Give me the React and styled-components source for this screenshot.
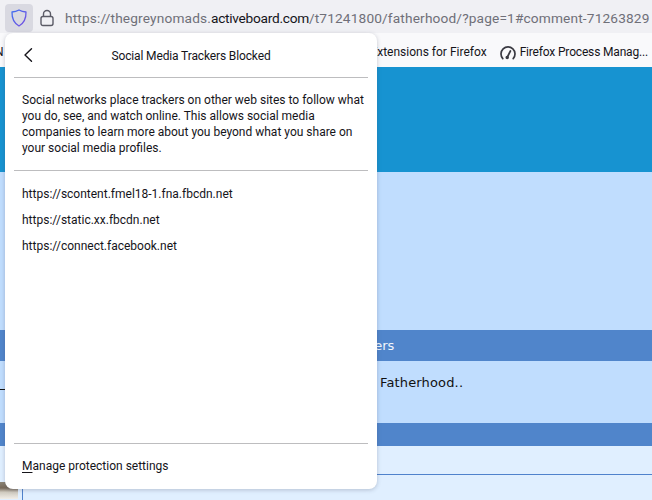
import React from "react";
import styled, { createGlobalStyle } from "styled-components";

const Global = createGlobalStyle`
  html, body { margin: 0; padding: 0; background: #e0efff; }
  body { font-family: Roboto, "Noto Sans", sans-serif; overflow: hidden; }
`;

const Page = styled.div`
  position: relative;
  width: 652px;
  height: 500px;
  overflow: hidden;
`;

const UrlBar = styled.div`
  height: 33px;
  background: #f0f0f4;
  display: flex;
  align-items: center;
  box-sizing: border-box;
  padding: 3px 0 0 5px;
  white-space: nowrap;
  overflow: hidden;
`;

const ShieldButton = styled.div`
  width: 28px;
  height: 28px;
  border-radius: 4px;
  background: #d9d9e1;
  display: flex;
  align-items: center;
  justify-content: center;
  flex: none;
`;

const LockBox = styled.div`
  width: 14px;
  height: 18px;
  margin-left: 7px;
  flex: none;
  display: flex;
`;

const Url = styled.div`
  margin-left: 11px;
  font-size: 13.7px;
  letter-spacing: 0.15px;
  color: #6f6f78;
  span { color: #15141a; letter-spacing: -0.27px; }
`;

const Bookmarks = styled.div`
  height: 34px;
  background: #f9f9fb;
  display: flex;
  align-items: center;
  justify-content: flex-end;
  box-sizing: border-box;
  padding: 4px 4px 0 0;
  font-size: 12px;
  color: #15141a;
  white-space: nowrap;
  gap: 13px;
`;

const Bookmark = styled.div`
  display: flex;
  align-items: center;
  gap: 4px;
  letter-spacing: ${p => p.$tracking || 0}px;
`;

const ClippedBookmark = styled(Bookmark)`
  margin-right: auto;
  margin-left: -5px;
`;

const Hero = styled.div`
  height: 105px;
  background: #1793d1;
`;

const Section = styled.div`
  height: ${p => p.$h}px;
  background: ${p => p.$bg};
  box-sizing: border-box;
`;

const Band = styled(Section)`
  color: #f2f6fc;
  font: 13px "DejaVu Sans", sans-serif;
  display: flex;
  align-items: center;
  padding-left: 334px;
`;

const PostText = styled(Section)`
  color: #111;
  font: 13px "DejaVu Sans", sans-serif;
  letter-spacing: 0.15px;
  display: flex;
  padding-top: 14px;
`;

const PostMark = styled.div`
  width: 5px;
  height: 1px;
  margin: 14px 375px 0 0;
  background: #111;
  flex: none;
`;

const Footer = styled(Section)`
  display: flex;
  padding-top: 28px;
`;

const Avatar = styled.div`
  width: 18px;
  height: 17px;
  margin: 8px 4px 0 0;
  flex: none;
  background: linear-gradient(180deg, #8d8577 0%, #77695a 35%, #cfcabf 60%, #f1eee8 100%);
`;

const Table = styled.div`
  flex: 1;
  border-top: 1px solid #4f82cc;
  border-left: 1px solid #4f82cc;
`;

const Popup = styled.div`
  position: absolute;
  left: 5px;
  top: 33px;
  width: 372px;
  height: 456px;
  background: #fff;
  border-radius: 8px;
  box-shadow: 0 1px 4px rgba(60, 70, 90, 0.28);
  display: flex;
  flex-direction: column;
  color: #15141a;
  font-size: 12px;
`;

const Header = styled.div`
  height: 44px;
  display: flex;
  align-items: center;
  justify-content: center;
  position: relative;
  flex: none;
  padding-top: 2px;
  box-sizing: border-box;
  letter-spacing: -0.13px;
`;

const Back = styled.div`
  position: absolute;
  left: 17px;
  top: 14px;
  width: 12px;
  height: 16px;
  display: flex;
`;

const Divider = styled.div`
  height: 1px;
  margin: 0 9px;
  background: #bdbdbf;
  flex: none;
`;

const Description = styled.p`
  margin: 0;
  padding: 14px 10px 5px 17px;
  line-height: 16px;
  flex: none;
  height: 92px;
  box-sizing: border-box;
`;

const Trackers = styled.ul`
  list-style: none;
  margin: 0;
  padding: 10px 17px 0;
  flex: 1;
`;

const Tracker = styled.li`
  height: 26px;
  line-height: 26px;
`;

const Manage = styled.div`
  height: 45px;
  display: flex;
  align-items: center;
  padding: 0 0 2px 17px;
  box-sizing: border-box;
  flex: none;
  u { text-underline-offset: 2px; }
`;

export default function App() {
  return (
    <Page>
      <Global />
      <UrlBar>
        <ShieldButton>
          <svg width="16" height="18" viewBox="0 0 16 18" fill="none">
            <defs>
              <linearGradient id="shieldStroke" x1="0" y1="0" x2="1" y2="1">
                <stop offset="0" stopColor="#3f6ff0" />
                <stop offset="1" stopColor="#7a4fe0" />
              </linearGradient>
            </defs>
            <path d="M8 1 C10 2.2 12.2 2.9 15 3 C15.2 9.6 12.6 14.4 8 17 C3.4 14.4 0.8 9.6 1 3 C3.8 2.9 6 2.2 8 1 Z" stroke="url(#shieldStroke)" strokeWidth="1.3" strokeLinejoin="round" />
          </svg>
        </ShieldButton>
        <LockBox>
          <svg width="14" height="18" viewBox="0 0 14 18" fill="none" stroke="#5b5b66" strokeWidth="1.4">
            <rect x="1" y="7.5" width="12" height="9" rx="2" />
            <path d="M3.5 7.5 V5 a3.5 3.5 0 0 1 7 0 V7.5" />
          </svg>
        </LockBox>
        <Url>https://thegreynomads.<span>activeboard.com</span>/t71241800/fatherhood/?page=1#comment-71263829</Url>
      </UrlBar>
      <Bookmarks>
        <ClippedBookmark>N</ClippedBookmark>
        <Bookmark>Extensions for Firefox</Bookmark>
        <Bookmark $tracking={-0.17}>
          <svg width="16" height="15" viewBox="0 0 16 15" fill="none" stroke="#3a3a42" strokeWidth="1.7" strokeLinecap="round">
            <path d="M2.8 13.6 A7 7 0 1 1 13.2 13.6" />
            <path d="M7.4 12 L10.4 6" />
            <circle cx="7.2" cy="12.4" r="0.9" fill="#3a3a42" />
          </svg>
          Firefox Process Manag...
        </Bookmark>
      </Bookmarks>
      <Hero />
      <Section $h={158} $bg="#c0ddfe" />
      <Band $h={31} $bg="#5085cb">Members</Band>
      <PostText $h={62} $bg="#c0ddfe"><PostMark />Fatherhood..</PostText>
      <Section $h={23} $bg="#5085cb" />
      <Footer $h={54} $bg="#e0efff">
        <Avatar />
        <Table />
      </Footer>
      <Popup>
        <Header>
          <Back>
            <svg width="12" height="16" viewBox="0 0 12 16" fill="none" stroke="#15141a" strokeWidth="1.4" strokeLinecap="round" strokeLinejoin="round">
              <path d="M9.5 1.8 L3 8 L9.5 14.2" />
            </svg>
          </Back>
          Social Media Trackers Blocked
        </Header>
        <Divider />
        <Description>
          Social networks place trackers on other web sites to follow what you do, see, and watch online. This allows social media companies to learn more about you beyond what you share on your social media profiles.
        </Description>
        <Divider />
        <Trackers>
          <Tracker>https://scontent.fmel18-1.fna.fbcdn.net</Tracker>
          <Tracker>https://static.xx.fbcdn.net</Tracker>
          <Tracker>https://connect.facebook.net</Tracker>
        </Trackers>
        <Divider />
        <Manage><span><u>M</u>anage protection settings</span></Manage>
      </Popup>
    </Page>
  );
}
